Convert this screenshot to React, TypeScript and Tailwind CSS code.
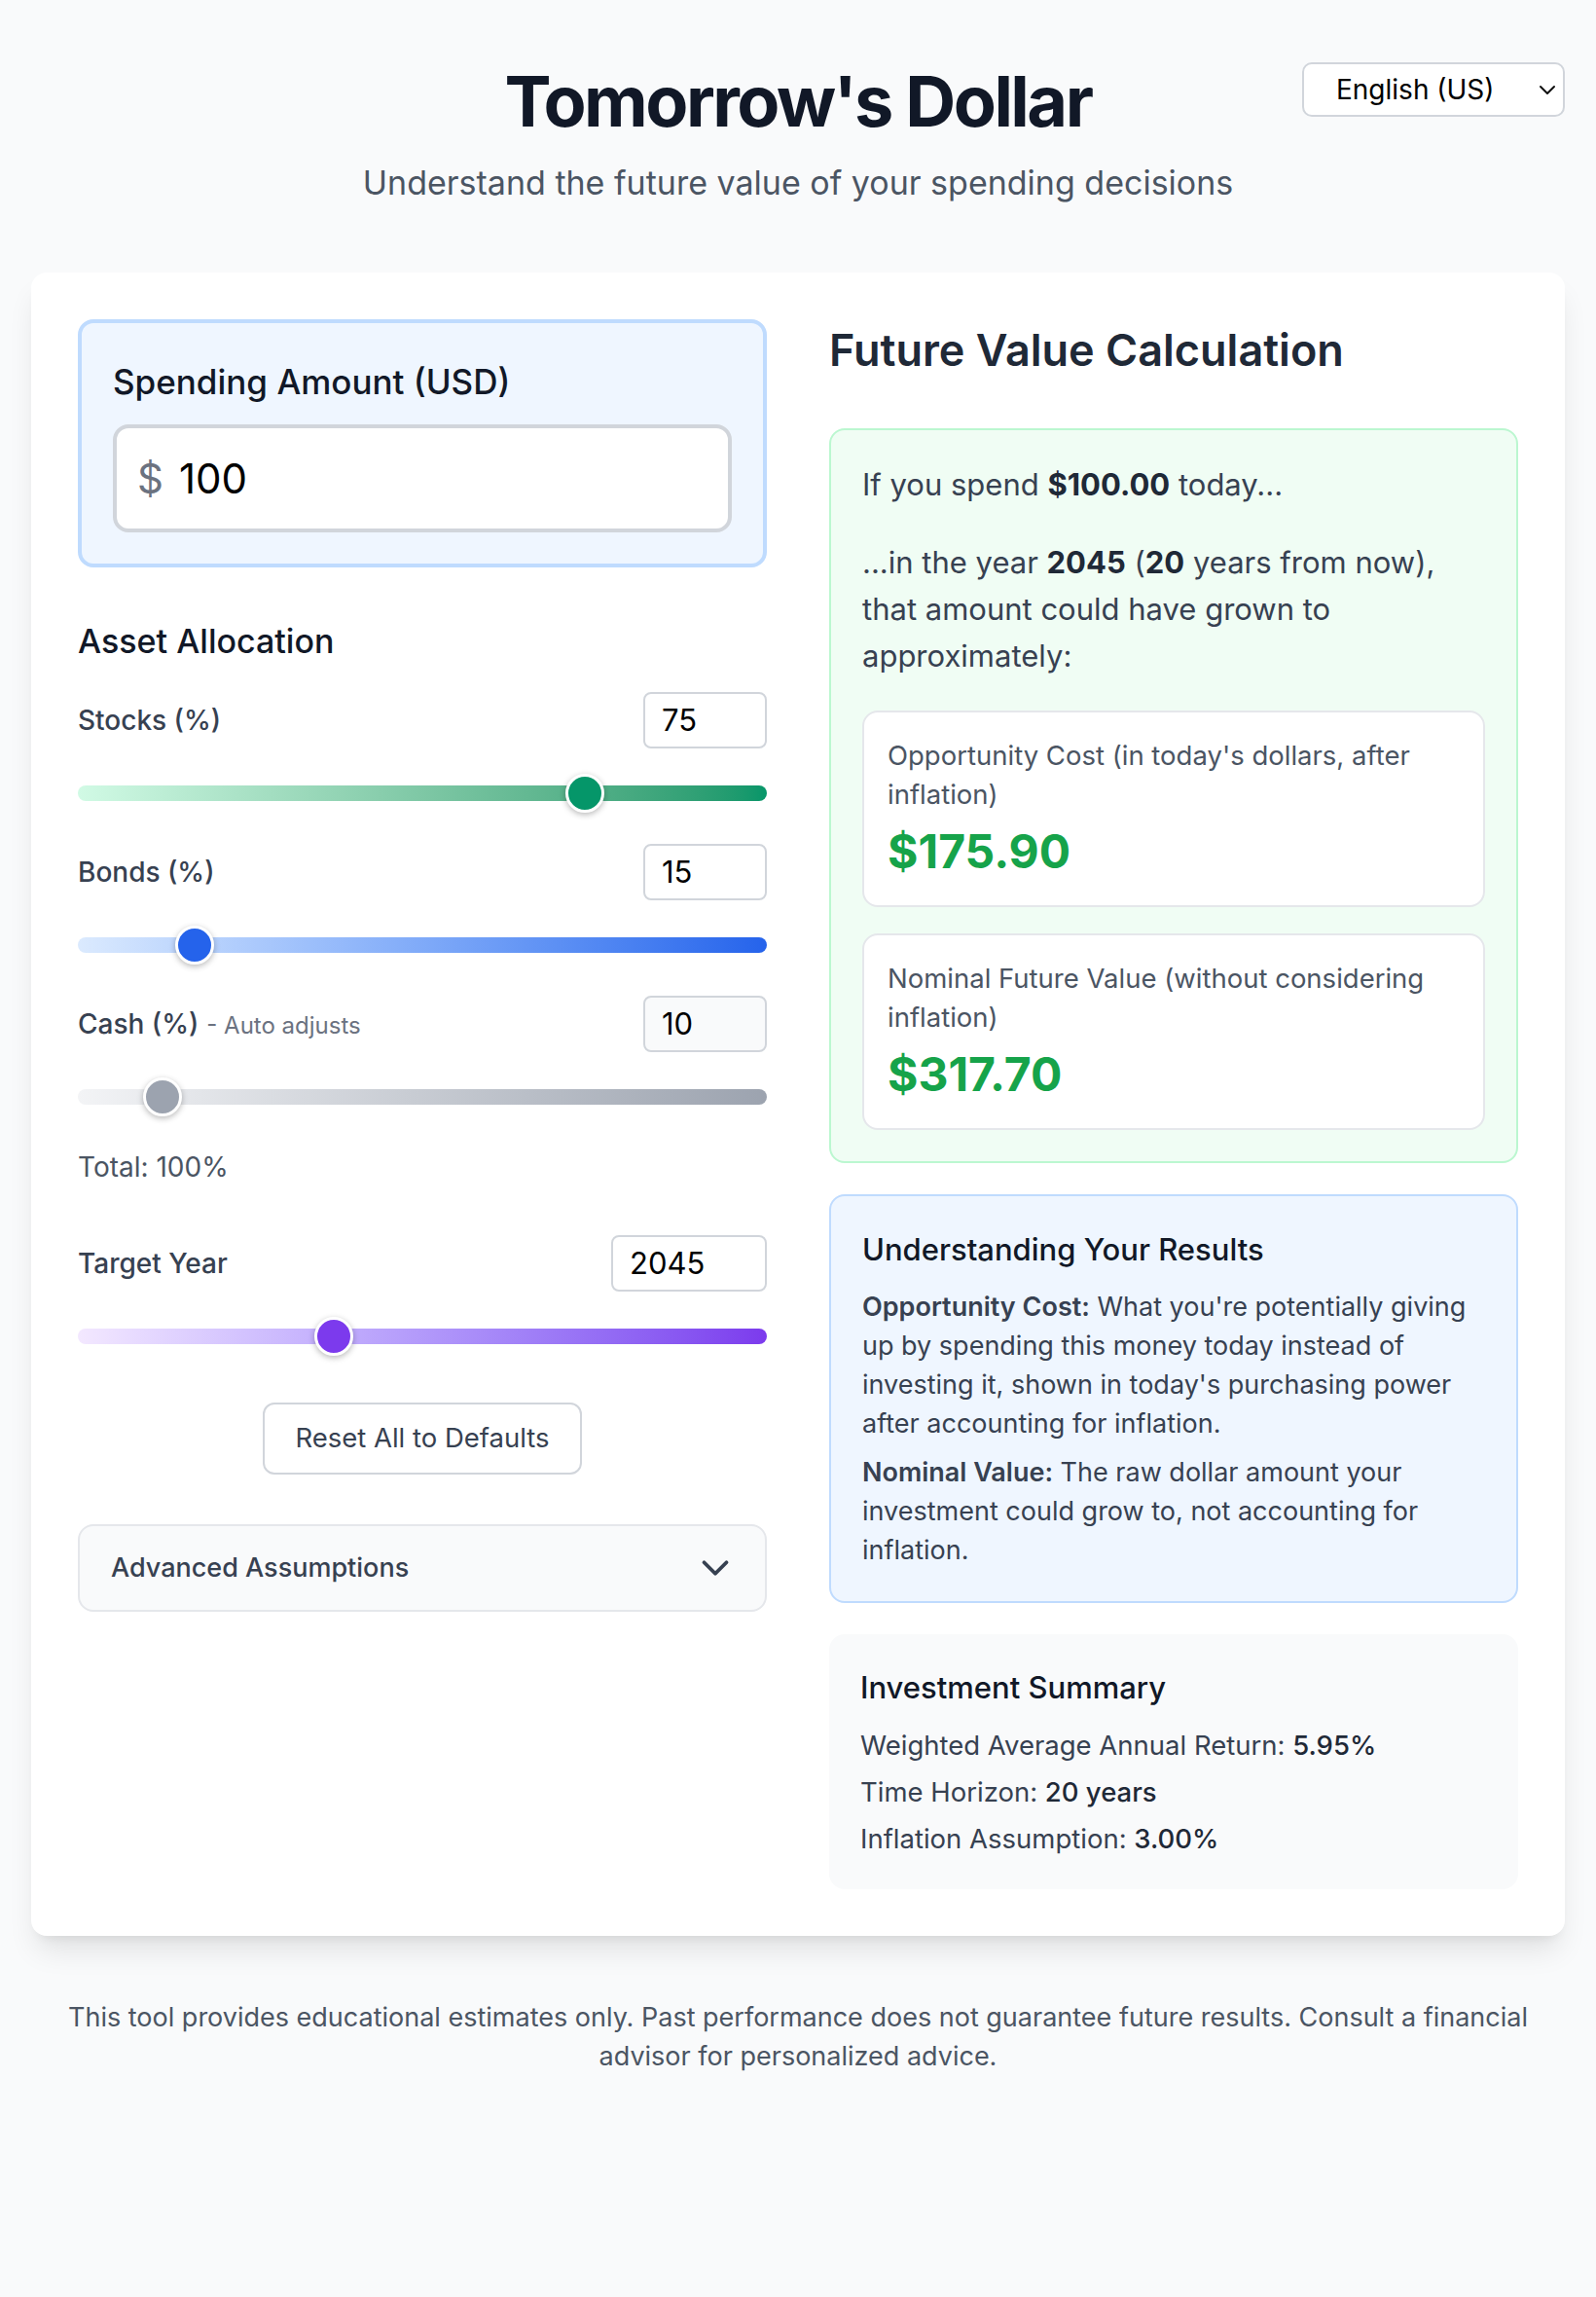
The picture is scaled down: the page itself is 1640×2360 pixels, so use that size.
import { ChevronDown } from "lucide-react";

type SliderProps = {
  value: number;
  min: number;
  max: number;
  track: string;
  thumb: string;
};

function Slider({ value, min, max, track, thumb }: SliderProps) {
  const pct = (value - min) / (max - min);
  return (
    <div className="relative h-10">
      <div className={`absolute inset-x-0 top-3 h-4 rounded-full ${track}`} />
      <div
        className={`absolute top-0 h-10 w-10 rounded-full border-[3px] border-white shadow-[0_2px_6px_rgba(0,0,0,0.28)] ${thumb}`}
        style={{ left: `calc(${pct} * (100% - 40px))` }}
      />
    </div>
  );
}

function NumberBox({ value, width, muted }: { value: string; width: string; muted?: boolean }) {
  return (
    <div
      className={`flex h-[58px] items-center rounded-[8px] border-2 border-[#d1d5db] px-[17px] text-[31px] text-black ${width} ${
        muted ? "bg-[#f9fafb]" : "bg-white"
      }`}
    >
      {value}
    </div>
  );
}

function AllocationRow({
  label,
  note,
  value,
  min,
  max,
  track,
  thumb,
  muted,
}: {
  label: string;
  note?: string;
  value: number;
  min: number;
  max: number;
  track: string;
  thumb: string;
  muted?: boolean;
}) {
  return (
    <div className="flex flex-col gap-[26px]">
      <div className="flex items-center justify-between">
        <div className="text-[28px] font-medium text-[#374151]">
          {label}
          {note && <span className="ml-2 text-[24px] font-normal text-[#6b7280]">{note}</span>}
        </div>
        <NumberBox value={String(value)} width="w-[127px]" muted={muted} />
      </div>
      <Slider value={value} min={min} max={max} track={track} thumb={thumb} />
    </div>
  );
}

function ResultCard({ label, amount }: { label: string; amount: string }) {
  return (
    <div className="rounded-[16px] border-2 border-[#e5e7eb] bg-white p-6">
      <p className="text-[27.5px] leading-[40px] text-[#4b5563]">{label}</p>
      <p className="mt-2 text-[48px] leading-[62px] font-bold text-[#16a34a]">{amount}</p>
    </div>
  );
}

export default function App() {
  return (
    <div className="min-h-screen bg-[#f9fafb] px-8 pt-16 pb-16 font-['Inter','Noto_Sans',sans-serif]">
      {/* header */}
      <header className="grid grid-cols-[1fr_auto_1fr] items-start">
        <div />
        <div className="text-center">
          <h1 className="text-[72px] leading-[80px] font-bold tracking-[-0.035em] text-[#111827]">
            Tomorrow's Dollar
          </h1>
          <p className="mt-4 text-[34px] leading-[56px] text-[#4b5563]">
            Understand the future value of your spending decisions
          </p>
        </div>
        <div className="flex justify-end">
          <div className="flex h-[56px] w-[270px] items-center justify-between rounded-[10px] border-2 border-[#d1d5db] bg-white pl-[33px] pr-[7px] text-[28px] text-black">
            <span>English (US)</span>
            <svg width="18" height="12" viewBox="0 0 18 12" fill="none">
              <path d="M2 3l7 7 7-7" stroke="#111" strokeWidth="2" strokeLinecap="round" strokeLinejoin="round" />
            </svg>
          </div>
        </div>
      </header>

      {/* main card */}
      <main className="mt-16 grid grid-cols-2 gap-16 rounded-[16px] bg-white p-12 shadow-[0_20px_30px_-6px_rgba(0,0,0,0.1),0_8px_12px_-8px_rgba(0,0,0,0.1)]">
        {/* inputs */}
        <section>
          <div className="rounded-[16px] border-4 border-[#bfdbfe] bg-[#eff6ff] p-8">
            <label className="mb-4 block text-[35px] leading-[56px] font-medium text-[#111827]">
              Spending Amount (USD)
            </label>
            <div className="flex h-[111px] items-center rounded-[16px] border-4 border-[#d1d5db] bg-white px-[21px]">
              <span className="text-[42px] text-[#6b7280]">$</span>
              <span className="ml-4 text-[42px] text-black">100</span>
            </div>
          </div>

          <h2 className="mt-12 mb-6 text-[34px] leading-[56px] font-medium text-[#111827]">Asset Allocation</h2>

          <div className="flex flex-col gap-8">
            <AllocationRow
              label="Stocks (%)"
              value={75}
              min={0}
              max={100}
              track="bg-linear-to-r from-[#d1fae5] to-[#059669]"
              thumb="bg-[#059669]"
            />
            <AllocationRow
              label="Bonds (%)"
              value={15}
              min={0}
              max={100}
              track="bg-linear-to-r from-[#dbeafe] to-[#2563eb]"
              thumb="bg-[#2563eb]"
            />
            <AllocationRow
              label="Cash (%)"
              note="- Auto adjusts"
              value={10}
              min={0}
              max={100}
              track="bg-linear-to-r from-[#f3f4f6] to-[#9ca3af]"
              thumb="bg-[#9ca3af]"
              muted
            />
          </div>

          <p className="mt-[28px] text-[28px] leading-[48px] text-[#4b5563]">Total: 100%</p>

          <div className="mt-[46px] flex flex-col gap-[26px]">
            <div className="flex items-center justify-between">
              <span className="text-[28px] font-medium text-[#374151]">Target Year</span>
              <NumberBox value="2045" width="w-[160px]" />
            </div>
            <Slider
              value={2045}
              min={2025}
              max={2080}
              track="bg-linear-to-r from-[#f3e8ff] to-[#7c3aed]"
              thumb="bg-[#7c3aed]"
            />
          </div>

          <button className="mx-auto mt-[48px] flex h-[74px] w-[328px] items-center justify-center rounded-[12px] border-2 border-[#d1d5db] bg-white text-[27.5px] text-[#374151]">
            Reset All to Defaults
          </button>

          <div className="mt-[51px] flex h-[90px] items-center justify-between rounded-[16px] border-2 border-[#e5e7eb] bg-[#f9fafb] pl-8 pr-[28px]">
            <span className="text-[27px] font-medium text-[#374151]">Advanced Assumptions</span>
            <ChevronDown size={46} strokeWidth={2} className="text-[#374151]" />
          </div>
        </section>

        {/* results */}
        <section>
          <h2 className="mb-12 text-[45px] leading-[64px] font-semibold text-[#1f2937]">Future Value Calculation</h2>

          <div className="rounded-[16px] border-2 border-[#bbf7d0] bg-[#f0fdf4] p-8">
            <p className="text-[31px] leading-[48px] text-[#374151]">
              If you spend <span className="font-bold text-[#1f2937]">$100.00</span> today...
            </p>
            <p className="mt-8 text-[31px] leading-[48px] text-[#374151]">
              ...in the year <span className="font-bold text-[#1f2937]">2045</span> (
              <span className="font-bold text-[#1f2937]">20</span> years from now), that amount could have grown to
              approximately:
            </p>
            <div className="mt-8 flex flex-col gap-[27px]">
              <ResultCard label="Opportunity Cost (in today's dollars, after inflation)" amount="$175.90" />
              <ResultCard label="Nominal Future Value (without considering inflation)" amount="$317.70" />
            </div>
          </div>

          <div className="mt-8 rounded-[16px] border-2 border-[#bfdbfe] bg-[#eff6ff] p-8">
            <h3 className="mb-4 text-[31px] leading-[46px] font-medium text-[#111827]">Understanding Your Results</h3>
            <p className="text-[27px] leading-[40px] text-[#374151]">
              <span className="font-semibold">Opportunity Cost:</span> What you're potentially giving up by spending
              this money today instead of investing it, shown in today's purchasing power after accounting for
              inflation.
            </p>
            <p className="mt-[10px] text-[27px] leading-[40px] text-[#374151]">
              <span className="font-semibold">Nominal Value:</span> The raw dollar amount your investment could grow
              to, not accounting for inflation.
            </p>
          </div>

          <div className="mt-8 rounded-[16px] bg-[#f9fafb] p-8">
            <h3 className="mb-4 text-[31px] leading-[46px] font-medium text-[#111827]">Investment Summary</h3>
            <div className="flex flex-col gap-2 text-[27.5px] leading-[40px] text-[#374151]">
              <p>
                Weighted Average Annual Return: <span className="font-medium text-[#1f2937]">5.95%</span>
              </p>
              <p>
                Time Horizon: <span className="font-medium text-[#1f2937]">20 years</span>
              </p>
              <p>
                Inflation Assumption: <span className="font-medium text-[#1f2937]">3.00%</span>
              </p>
            </div>
          </div>
        </section>
      </main>

      <footer className="mt-16 px-6 text-center text-[27px] leading-[40px] text-[#4b5563]">
        This tool provides educational estimates only. Past performance does not guarantee future results. Consult a
        financial advisor for personalized advice.
      </footer>
    </div>
  );
}
